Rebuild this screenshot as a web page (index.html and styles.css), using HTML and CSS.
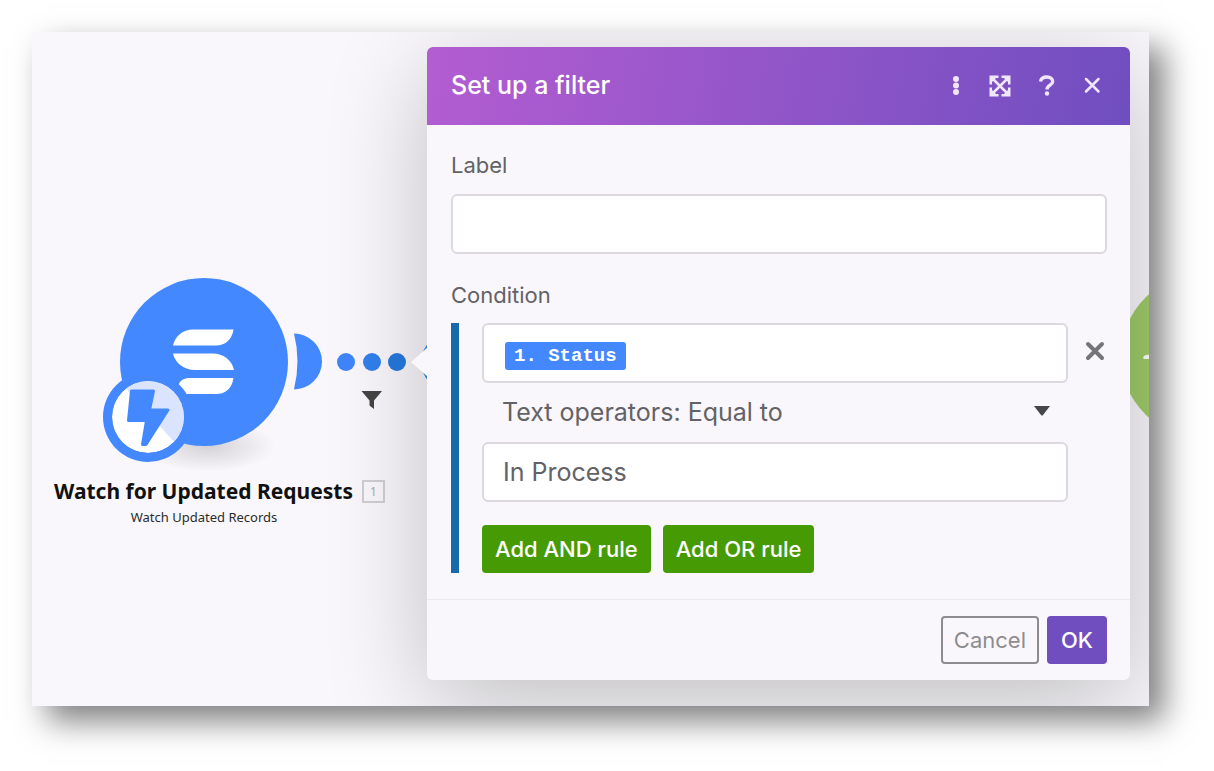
FILE: index.html
```
<!DOCTYPE html>
<html lang="en">
<head>
<meta charset="utf-8">
<title>Set up a filter</title>
<link rel="stylesheet" href="styles.css">
</head>
<body>
<main class="canvas">
  <div class="node-target" aria-hidden="true">
    <svg width="164" height="164" viewBox="0 0 164 164"><circle cx="82" cy="82" r="82" fill="#9fcb6a"/><path d="M22 84q1-4 8-3v4h-7z" fill="#fff"/></svg>
  </div>
  <section class="module">
    <svg class="module-art" width="344" height="200" viewBox="96 270 344 200" aria-hidden="true">
      <defs>
        <radialGradient id="ground"><stop offset="0" stop-color="#000" stop-opacity=".15"/><stop offset="1" stop-color="#000" stop-opacity="0"/></radialGradient>
        <clipPath id="badge"><circle cx="148" cy="417" r="36"/></clipPath>
      </defs>
      <ellipse cx="208" cy="446" rx="68" ry="26" fill="url(#ground)"/>
      <circle cx="204" cy="362" r="84" fill="#4488ff"/>
      <path fill="#fff" d="M173 345.500C175 336 183 329.500 193 329.500H233.500C232 339 226 345.500 216 345.500Z"/>
      <path fill="#fff" d="M173 353.500H213C223 353.500 232 360 234 370H195C184 370 175 363 173 353.500Z"/>
      <path fill="#fff" d="M178 386C180 380 184 378 190 378H233.500C232 388 226 394 216 394H186Z"/>
      <circle cx="148" cy="417" r="45" fill="#4488ff"/>
      <g clip-path="url(#badge)">
        <circle cx="148" cy="417" r="36" fill="#fff"/>
        <path d="M120 378L130 394L158 424L175 443L200 417L190 370Z" fill="#dbe4fe"/>
      </g>
      <path d="M131.500 391H153.500L149.500 410H168L146 444.500H142.500L146.500 420.500H128.500Z" fill="#4488ff" stroke="#4488ff" stroke-width="3" stroke-linejoin="round"/>
      <path d="M294 333.500A28 28 0 0 1 294 389.500Q301 361 294 333.500Z" fill="#4488ff"/>
      <circle cx="346" cy="362" r="9" fill="#4085fb"/>
      <circle cx="372" cy="362" r="9" fill="#3180ed"/>
      <circle cx="397" cy="362" r="9" fill="#2679df"/>
      <circle cx="449" cy="362" r="28" fill="#2a90d8"/>
      <path d="M361.500 391H382L374 400.500V409L369.500 405.500V400.500Z" fill="#454545"/>
    </svg>
    <div class="module-name">
      <h2 class="module-title">Watch for Updated Requests</h2>
      <span class="module-index">1</span>
    </div>
    <p class="module-subtitle">Watch Updated Records</p>
  </section>

  <form class="dialog" role="dialog" aria-labelledby="dialog-title">
    <header class="dialog-header">
      <h1 class="dialog-title" id="dialog-title">Set up a filter</h1>
      <button class="icon-button" type="button" aria-label="More"><svg width="24" height="24" viewBox="0 0 24 24" fill="currentColor"><circle cx="14" cy="5" r="3"/><circle cx="14" cy="11.500" r="3"/><circle cx="14" cy="18" r="3"/></svg></button>
      <button class="icon-button" type="button" aria-label="Expand"><svg width="24" height="24" viewBox="0 0 24 24" fill="none" stroke="currentColor" stroke-width="2.500"><path d="M4 4L20 20M20 4L4 20"/><path d="M2.750 10.500V2.750H10.500M13.500 2.750H21.250V10.500M21.250 13.500V21.250H13.500M10.500 21.250H2.750V13.500"/><path d="M2 2H10L2 10ZM22 2V10L14 2ZM22 22H14L22 14ZM2 22V14L10 22Z" fill="currentColor" stroke="none"/></svg></button>
      <button class="icon-button" type="button" aria-label="Help"><svg width="24" height="24" viewBox="0 0 24 24" fill="none" stroke="currentColor" stroke-width="3.300"><path d="M6.500 7.500C7 4.500 9.500 3 13 3C16.500 3 18.700 4.800 18.700 7.500C18.700 11.500 13 11 13 15.500"/><circle cx="13" cy="19.500" r="2.200" fill="currentColor" stroke="none"/></svg></button>
      <button class="icon-button" type="button" aria-label="Close"><svg width="24" height="24" viewBox="0 0 24 24" fill="none" stroke="currentColor" stroke-width="2.500" stroke-linecap="round"><path d="M6 5L18.500 17.500M18.500 5L6 17.500"/></svg></button>
    </header>
    <div class="dialog-body">
      <label class="field-label" for="filter-label">Label</label>
      <input class="field" id="filter-label" type="text">
      <span class="field-label condition-label" id="condition-label">Condition</span>
      <div class="rule" role="group" aria-labelledby="condition-label">
        <div class="rule-fields">
          <div class="field token-field"><span class="token">1. Status</span></div>
          <div class="operator">
            <select class="operator-select" aria-label="Operator"><option>Text operators: Equal to</option></select>
            <svg class="operator-arrow" width="16" height="10" viewBox="0 0 16 10" aria-hidden="true"><path d="M0 0H16L9 9Q8 10 7 9Z" fill="#45464a"/></svg>
          </div>
          <input class="field" type="text" value="In Process" aria-label="Value">
          <div class="rule-actions">
            <button class="button button-add" type="button">Add AND rule</button>
            <button class="button button-add" type="button">Add OR rule</button>
          </div>
        </div>
        <button class="remove-button" type="button" aria-label="Remove rule"><svg width="20" height="20" viewBox="0 0 20 20" fill="none" stroke="#757477" stroke-width="4" stroke-linecap="round"><path d="M3 3L17 17M17 3L3 17"/></svg></button>
      </div>
    </div>
    <footer class="dialog-footer">
      <button class="button button-cancel" type="button">Cancel</button>
      <button class="button button-ok" type="submit">OK</button>
    </footer>
  </form>
</main>
</body>
</html>
```

FILE: styles.css
```
* {
  box-sizing: border-box;
}

body {
  margin: 0;
  padding: 32px 65px 65px 32px;
  background: #fff;
  font-family: Inter, "Liberation Sans", sans-serif;
  color: #636266;
}

.canvas {
  position: relative;
  display: grid;
  grid-template-columns: 395px minmax(0, 1fr);
  align-items: start;
  padding: 15px 19px 26px 0;
  overflow: hidden;
  background: #f9f7fb;
  box-shadow: 15px 15px 30px rgba(0, 0, 0, 0.5);
}

.node-target {
  position: absolute;
  right: -136px;
  top: 242px;
}

.module {
  position: absolute;
  left: 0;
  top: 238px;
  width: 344px;
}

.module-art {
  display: block;
  margin-left: 64px;
}

.module-name {
  display: flex;
  align-items: center;
  gap: 9px;
  padding-left: 22px;
  margin-top: 9px;
}

.module-title {
  margin: 0;
  font: bold 21px/24px "Noto Sans", sans-serif;
  color: #111;
  white-space: nowrap;
}

.module-index {
  flex: none;
  width: 23px;
  border: 2px solid #d0ced2;
  font: 12px/19px "Noto Sans", sans-serif;
  text-align: center;
  color: #aaa;
}

.module-subtitle {
  margin: 4px 0 0;
  font: 13px/20px "Noto Sans", sans-serif;
  color: #2b2b2b;
  text-align: center;
}

.dialog {
  position: relative;
  grid-column: 2;
  border-radius: 6px;
  background: #f9f7fb;
  box-shadow: 0 24px 100px rgba(0, 0, 0, 0.23);
}

/* Pointer towards the filter's link */
.dialog::before {
  content: "";
  position: absolute;
  left: -16px;
  top: 300px;
  width: 17px;
  height: 30px;
  background: #f9f7fb;
  clip-path: polygon(0 50%, 100% 0, 100% 100%);
}

.dialog-header {
  display: flex;
  align-items: center;
  gap: 22px;
  height: 78px;
  padding: 0 26px 0 24px;
  border-radius: 6px 6px 0 0;
  background: linear-gradient(100deg, #b35dd1, #704ec0);
  color: #fff;
}

.dialog-title {
  flex: 1;
  margin: 0;
  padding-bottom: 2px;
  font-size: 25px;
  font-weight: 500;
  line-height: 32px;
}

.icon-button,
.remove-button {
  display: flex;
  padding: 0;
  border: 0;
  background: none;
  color: #f0e6fa;
}

.dialog-body {
  display: flex;
  flex-direction: column;
  padding: 25px 23px 26px 24px;
}

.field-label {
  margin-bottom: 14px;
  font-size: 22px;
  line-height: 30px;
}

.condition-label {
  margin: 26px 0 13px;
}

.field {
  width: 100%;
  height: 60px;
  padding: 0 19px;
  border: 2px solid #dbd9dd;
  border-radius: 6px;
  background: #fff;
  font: 25px/32px Inter, sans-serif;
  color: #636266;
}

.rule {
  display: flex;
  align-items: flex-start;
  gap: 17px;
  padding-left: 23px;
  border-left: 8px solid #176aaa;
}

.rule-fields {
  flex: 1;
  min-width: 0;
}

.token-field {
  display: flex;
  align-items: center;
  padding: 6px 21px 0;
}

.token {
  padding: 0 9px;
  border-radius: 3px;
  background: #4488ff;
  font: bold 19px/28px "Liberation Mono", monospace;
  color: #fff;
}

.operator {
  display: grid;
  align-items: center;
}

.operator-select {
  grid-area: 1 / 1;
  width: 100%;
  height: 59px;
  padding: 0 20px 2px;
  border: 0;
  appearance: none;
  background: none;
  font: 25px/32px Inter, sans-serif;
  color: #636266;
}

.operator-arrow {
  grid-area: 1 / 1;
  justify-self: end;
  margin: 0 18px 3px 0;
  pointer-events: none;
}

.rule-actions {
  display: flex;
  gap: 12px;
  margin-top: 23px;
}

.button {
  height: 48px;
  padding: 0 13px;
  border: 0;
  border-radius: 4px;
  font: 500 22px/28px Inter, sans-serif;
  color: #fff;
}

.button-add {
  background: #469b05;
}

.remove-button {
  margin: 18px 2px 0 0;
}

.dialog-footer {
  display: flex;
  justify-content: flex-end;
  gap: 8px;
  padding: 16px 23px 16px 24px;
  border-top: 1px solid #eceaee;
}

.button-cancel {
  border: 2px solid #8d8c90;
  padding: 0 11px;
  background: none;
  font-weight: 400;
  color: #8d8c90;
}

.button-ok {
  padding: 0 14px;
  background: #704ec0;
}
```
